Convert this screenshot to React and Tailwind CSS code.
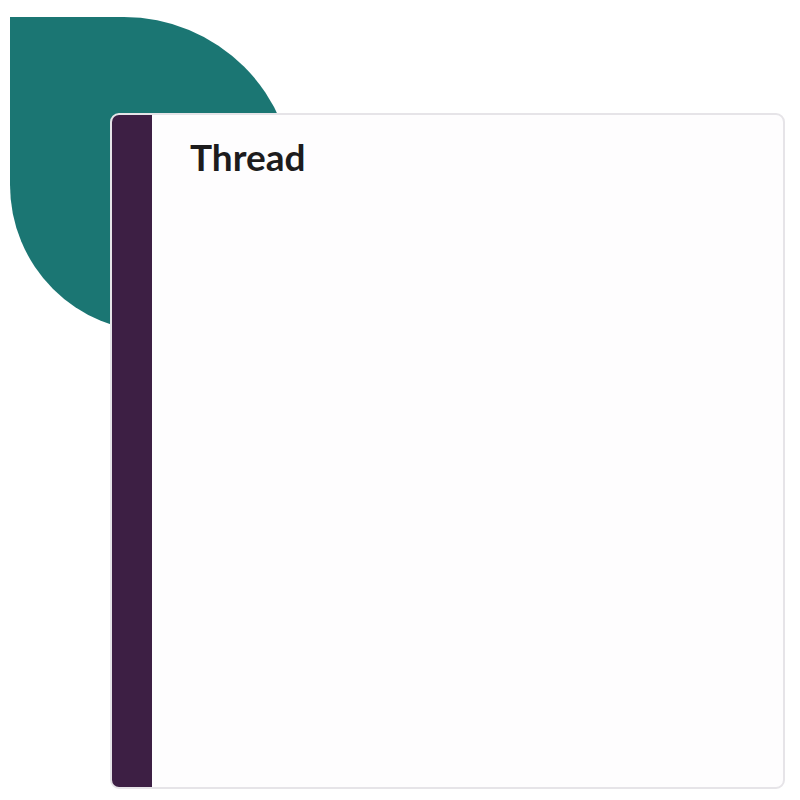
export default function App() {
  return (
    <div className="relative w-[800px] h-[800px] bg-white overflow-hidden" style={{ fontFamily: "Lato, 'Noto Sans', sans-serif" }}>
      <div className="absolute left-[10px] top-[17px] w-[284px] h-[315px] bg-[#1b7673] rounded-tr-[170px] rounded-bl-[147px]" />
      <div className="relative pt-[113px] pl-[110px]">
        <div className="flex w-[675px] h-[676px] bg-[#fefdfe] border-2 border-[#e6e4e8] rounded-[9px] overflow-hidden">
          <div className="w-[40px] shrink-0 bg-[#3d1f44]" />
          <div className="flex-1 pl-[38px] pt-[18px]">
            <h1 className="text-[37px] leading-[48px] font-bold text-[#1d1c1d]">Thread</h1>
          </div>
        </div>
      </div>
    </div>
  );
}
